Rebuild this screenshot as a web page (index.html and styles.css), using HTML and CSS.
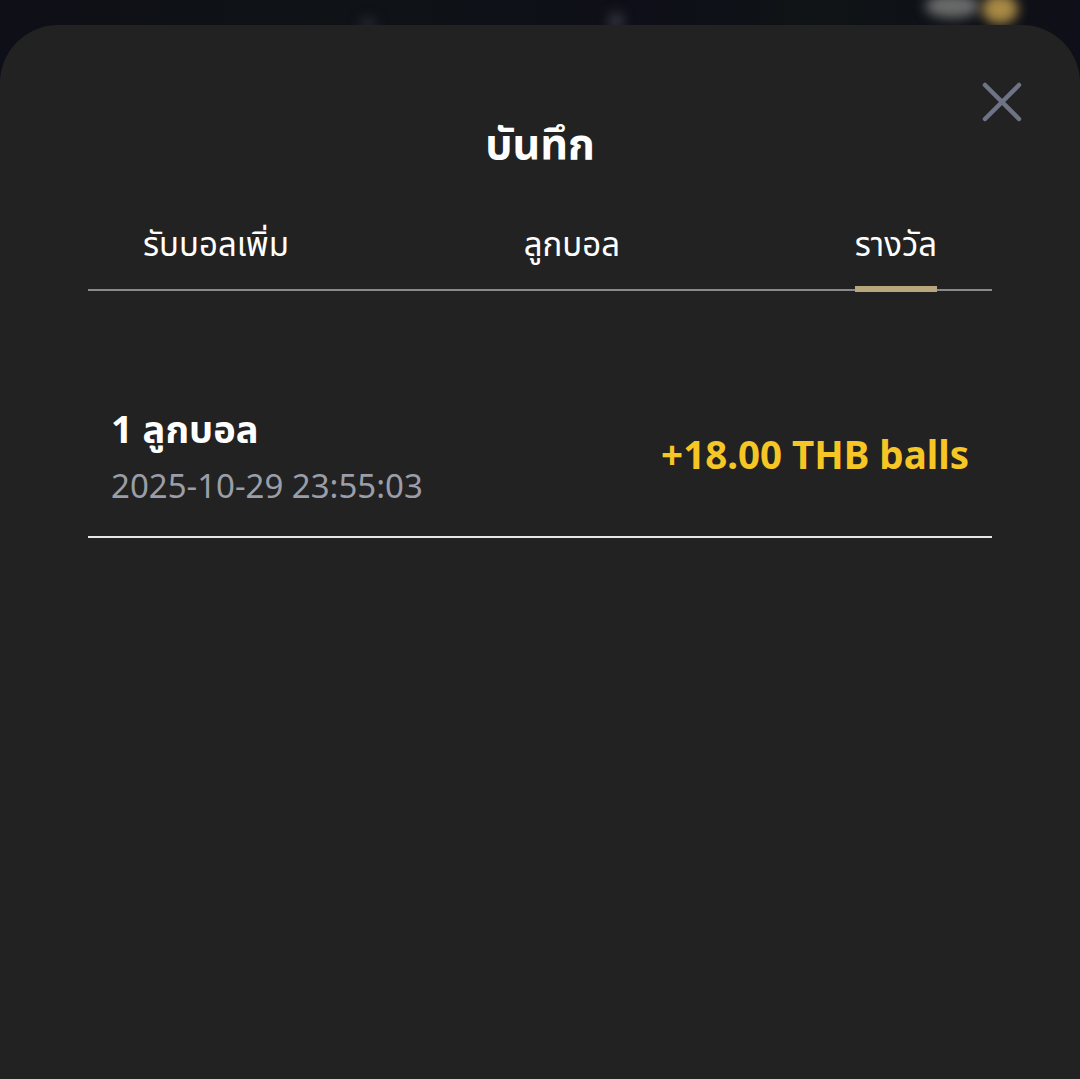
FILE: index.html
```html
<!DOCTYPE html>
<html lang="th">
<head>
<meta charset="utf-8">
<link rel="stylesheet" href="styles.css">
</head>
<body>
<div class="backdrop">
  <div class="blur blur-gray"></div>
  <div class="blur blur-gold"></div>
  <div class="blur blur-dot1"></div>
  <div class="blur blur-dot2"></div>
</div>
<div class="sheet">
  <button class="close" aria-label="close">
    <svg width="44" height="44" viewBox="0 0 44 44"><path d="M5 5 L39 39 M39 5 L5 39" stroke="#6e7486" stroke-width="4.5" stroke-linecap="round" fill="none"/></svg>
  </button>
  <h1 class="title">บันทึก</h1>
  <div class="tabs">
    <div class="tab">รับบอลเพิ่ม</div>
    <div class="tab">ลูกบอล</div>
    <div class="tab active">รางวัล</div>
  </div>
  <div class="record">
    <div class="record-info">
      <div class="record-name">1 ลูกบอล</div>
      <div class="record-time">2025-10-29 23:55:03</div>
    </div>
    <div class="record-amount">+18.00 THB balls</div>
  </div>
</div>
</body>
</html>
```
FILE: styles.css
```css
* { box-sizing: border-box; }
html, body {
  margin: 0;
  padding: 0;
  width: 1080px;
  height: 1079px;
  overflow: hidden;
  background: #0e0f18;
  font-family: "Noto Sans", "Noto Sans Thai", "Open Sans", sans-serif;
}
body { position: relative; }
.backdrop {
  position: absolute;
  left: 0; top: 0;
  width: 1080px; height: 40px;
  background: linear-gradient(90deg, #0e0f17 0%, #0f1316 30%, #0e0f18 60%, #0f1416 75%, #0e0f18 100%);
}
.blur { position: absolute; border-radius: 50%; filter: blur(6px); }
.blur-gray { left: 925px; top: -6px; width: 55px; height: 24px; background: #6b6b6b; }
.blur-gold { left: 982px; top: -6px; width: 36px; height: 30px; background: #a98a45; }
.blur-dot1 { left: 360px; top: 18px; width: 16px; height: 12px; background: #2a2b36; }
.blur-dot2 { left: 608px; top: 12px; width: 16px; height: 18px; background: #33343f; }
.sheet {
  position: absolute;
  left: 0; top: 25px;
  width: 1080px; height: 1060px;
  background: #222222;
  border-radius: 58px 58px 0 0;
  padding: 0 88px;
}
.close {
  position: absolute;
  right: 56px; top: 55px;
  width: 44px; height: 44px;
  padding: 0; border: 0; background: none;
  display: flex;
}
.title {
  margin: 0;
  padding-top: 96px;
  height: 202px;
  text-align: center;
  color: #ffffff;
  font-size: 43px;
  font-weight: 700;
  line-height: 1;
}
.tabs {
  display: flex;
  justify-content: space-between;
  padding: 0 55px;
  border-bottom: 2px solid #8a8a8a;
  height: 64px;
}
.tab {
  position: relative;
  color: #ffffff;
  font-size: 33px;
  line-height: 1;
}
.tab.active::after {
  content: "";
  position: absolute;
  left: 0; right: 0;
  bottom: -3px;
  height: 6px;
  background: #b8a77c;
}
.record {
  display: flex;
  align-items: center;
  justify-content: space-between;
  margin-top: 109px;
  padding: 0 23px 20px;
  border-bottom: 2px solid #e6e6e6;
}
.record-name {
  color: #ffffff;
  font-size: 38px;
  font-weight: 700;
  line-height: 56px;
}
.record-time {
  color: #9b9ea8;
  font-size: 33px;
  line-height: 60px;
}
.record-amount {
  color: #f6c625;
  font-size: 38.5px;
  font-weight: 700;
  margin-bottom: 8px;
}
```
